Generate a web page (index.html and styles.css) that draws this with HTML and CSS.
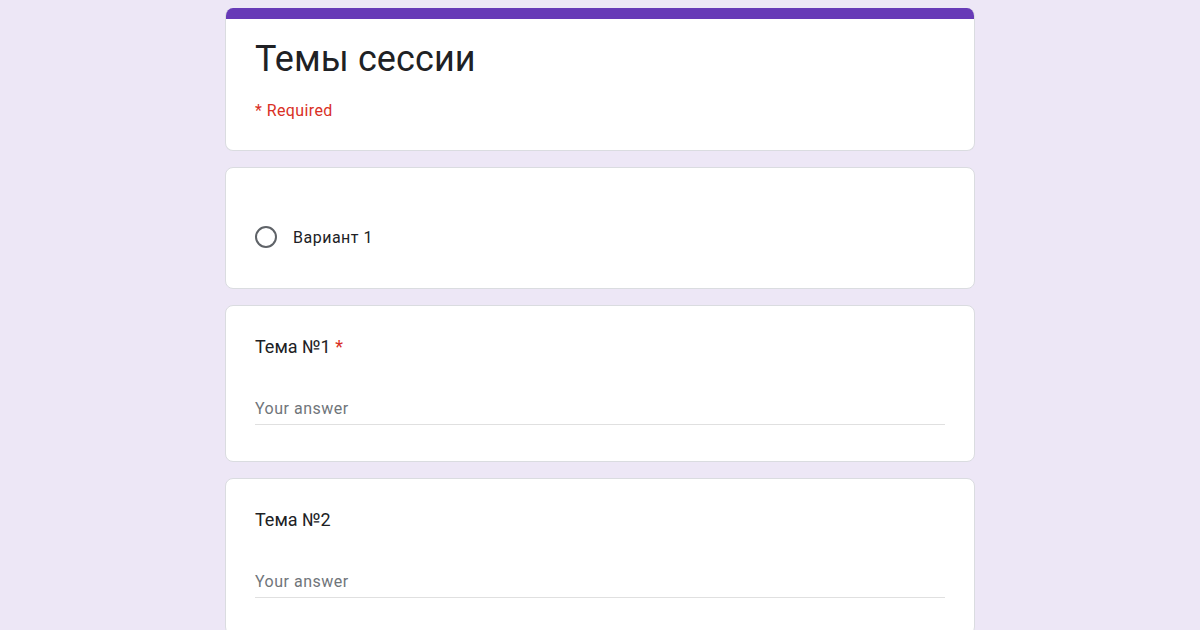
FILE: index.html
```html
<!DOCTYPE html>
<html>
<head lang="ru">
    <meta charset="UTF-8">
    <title>Темы сессии</title>

    <link rel="stylesheet" href="styles.css">

</head>
<body>

    <div id="form">
        <!-- шапка формы -->
        <div class="card head-card">
            <div class="bar"></div>
            <div class="head">
                <div class="form-title">Темы сессии</div>
                <div class="required">* Required</div>
            </div>
        </div>

        <!-- вариант -->
        <div class="card option-card">
            <label class="option">
                <span class="radio"></span>
                <span class="option-text">Вариант 1</span>
            </label>
        </div>

        <!-- вопросы -->
        <div class="card question">
            <div class="q-title">Тема №1 <span class="star">*</span></div>
            <div class="answer">Your answer</div>
        </div>

        <div class="card question">
            <div class="q-title">Тема №2</div>
            <div class="answer">Your answer</div>
        </div>
    </div>

</body>
</html>
```

FILE: styles.css
```css
*{
    margin: 0px;
    padding: 0px;
    box-sizing: border-box;
}

body{
    background: #ede7f6;
    font-family: Roboto, "Noto Sans", Arial, sans-serif;
    color: #202124;
    padding-top: 8px;
}

#form{
    width: 750px;
    margin: 0 auto;
    display: flex;
    flex-direction: column;
    gap: 16px;
}

.card{
    background: #fff;
    border: 1px solid #dadce0;
    border-radius: 8px;
    overflow: hidden;
}

.head-card{
    border-top: none;
}

.head-card .bar{
    height: 11px;
    background: #673ab7;
}

.head{
    padding: 16px 29px 27px;
}

.form-title{
    font-size: 36px;
    line-height: 48px;
    font-weight: 400;
    letter-spacing: 0.1px;
}

.required{
    margin-top: 16px;
    font-size: 16px;
    line-height: 24px;
    color: #d93025;
    letter-spacing: 0.4px;
}

.option-card{
    padding: 49px 29px 31px;
}

.option{
    height: 40px;
    display: flex;
    align-items: center;
}

.radio{
    width: 22px;
    height: 22px;
    border: 2px solid #5f6368;
    border-radius: 50%;
}

.option-text{
    margin-left: 16px;
    font-size: 16px;
    letter-spacing: 0.5px;
}

.question{
    padding: 29px 29px 36px;
}

.q-title{
    font-size: 18px;
    line-height: 24px;
}

.star{
    color: #d93025;
}

.answer{
    margin-top: 38px;
    font-size: 16px;
    line-height: 24px;
    padding-bottom: 3px;
    color: #70757a;
    letter-spacing: 0.5px;
    border-bottom: 1px solid #e0e0e0;
}
```
